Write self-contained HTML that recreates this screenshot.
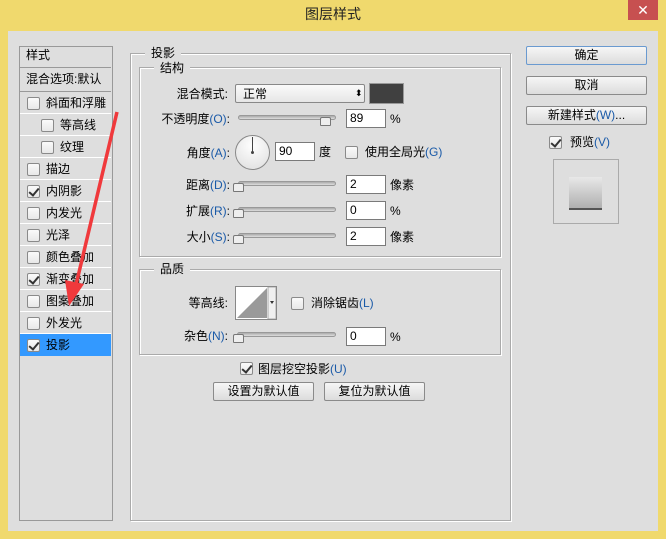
<!DOCTYPE html>
<html><head><meta charset="utf-8"><style>
*{margin:0;padding:0;box-sizing:border-box}
body{width:666px;height:539px;background:#f0d96d;position:relative;overflow:hidden;font-family:"Liberation Sans","Noto Sans CJK SC",sans-serif;font-size:12px;color:#000}
.a{position:absolute}
.t{position:absolute;white-space:nowrap;line-height:14px}
.cb{position:absolute;width:13px;height:13px;border:1px solid #8a8a8a;background:linear-gradient(#fafafa,#e8e8e8);border-radius:2px}
.cb.c::after{content:"";position:absolute;left:3px;top:0px;width:4px;height:8px;border:solid #333;border-width:0 2px 2px 0;transform:rotate(40deg)}
.row{position:absolute;left:20px;width:91px;height:22px;border-bottom:1px solid #fff}
.in{position:absolute;width:40px;height:19px;background:#fff;border:1px solid #7a7a7a;padding-left:3px;line-height:17px}
.sl{position:absolute;height:5px;border:1px solid #999;border-radius:3px;background:linear-gradient(#aaa,#ddd)}
.th{position:absolute;width:11px;height:9px;border:1px solid #777;background:#eee;border-radius:2px 2px 1px 1px}
.btn{position:absolute;height:19px;border:1px solid #8a8a8a;border-radius:2px;background:linear-gradient(#f6f6f6,#dcdcdc);text-align:center;line-height:17px}
.gb{position:absolute;border:1px solid #aaa;box-shadow:1px 1px 0 #fff inset,1px 1px 0 #fff}
.lg{position:absolute;background:#dedede;padding:0 6px;line-height:14px}
.bl{color:#1a5aa8}
</style></head><body>
<div class="t" style="left:0;width:666px;top:7px;text-align:center;font-size:14px;color:#222">图层样式</div>
<div class="a" style="left:628px;top:0;width:30px;height:20px;background:#c75050;color:#fff;text-align:center;line-height:20px;font-size:14px">✕</div>
<div class="a" style="left:8px;top:31px;width:650px;height:500px;background:#dedede"></div>

<!-- left panel -->
<div class="a" style="left:19px;top:46px;width:94px;height:475px;border:1px solid #999;background:#dedede"></div>
<div class="row" style="top:47px;height:21px;border-bottom:1px solid #999"></div>
<div class="t" style="left:26px;top:48px">样式</div>
<div class="row" style="top:68px;height:24px;border-bottom:1px solid #999"></div>
<div class="t" style="left:26px;top:72px">混合选项:默认</div>

<div class="row" style="top:92px"></div><div class="cb" style="left:27px;top:97px"></div><div class="t" style="left:46px;top:96px">斜面和浮雕</div>
<div class="row" style="top:114px"></div><div class="cb" style="left:41px;top:119px"></div><div class="t" style="left:60px;top:118px">等高线</div>
<div class="row" style="top:136px"></div><div class="cb" style="left:41px;top:141px"></div><div class="t" style="left:60px;top:140px">纹理</div>
<div class="row" style="top:158px"></div><div class="cb" style="left:27px;top:163px"></div><div class="t" style="left:46px;top:162px">描边</div>
<div class="row" style="top:180px"></div><div class="cb c" style="left:27px;top:185px"></div><div class="t" style="left:46px;top:184px">内阴影</div>
<div class="row" style="top:202px"></div><div class="cb" style="left:27px;top:207px"></div><div class="t" style="left:46px;top:206px">内发光</div>
<div class="row" style="top:224px"></div><div class="cb" style="left:27px;top:229px"></div><div class="t" style="left:46px;top:228px">光泽</div>
<div class="row" style="top:246px"></div><div class="cb" style="left:27px;top:251px"></div><div class="t" style="left:46px;top:250px">颜色叠加</div>
<div class="row" style="top:268px"></div><div class="cb c" style="left:27px;top:273px"></div><div class="t" style="left:46px;top:272px">渐变叠加</div>
<div class="row" style="top:290px"></div><div class="cb" style="left:27px;top:295px"></div><div class="t" style="left:46px;top:294px">图案叠加</div>
<div class="row" style="top:312px"></div><div class="cb" style="left:27px;top:317px"></div><div class="t" style="left:46px;top:316px">外发光</div>
<div class="row" style="top:334px;height:22px;background:#3399ff;border:none"></div><div class="cb c" style="left:27px;top:339px"></div><div class="t" style="left:46px;top:338px">投影</div>

<!-- main group -->
<div class="gb" style="left:130px;top:53px;width:381px;height:468px"></div>
<div class="lg" style="left:145px;top:46px">投影</div>
<div class="gb" style="left:139px;top:67px;width:362px;height:190px"></div>
<div class="lg" style="left:154px;top:61px">结构</div>

<div class="t" style="left:160px;top:87px;width:68px;text-align:right">混合模式:</div>
<div class="a" style="left:235px;top:84px;width:130px;height:19px;border:1px solid #888;border-radius:2px;background:linear-gradient(#fafafa,#e6e6e6)"></div>
<div class="t" style="left:243px;top:87px">正常</div>
<div class="t" style="left:355px;top:86px;font-size:9px">⬍</div>
<div class="a" style="left:369px;top:83px;width:35px;height:21px;border:1px solid #999;background:#404040"></div>

<div class="t" style="left:150px;top:112px;width:80px;text-align:right">不透明度<span class="bl">(O)</span>:</div>
<div class="sl" style="left:238px;top:115px;width:98px"></div><div class="th" style="left:320px;top:117px"></div>
<div class="in" style="left:346px;top:109px">89</div><div class="t" style="left:390px;top:112px">%</div>

<div class="t" style="left:170px;top:146px;width:60px;text-align:right">角度<span class="bl">(A)</span>:</div>
<div class="a" style="left:235px;top:135px;width:35px;height:35px;border:1px solid #888;border-radius:50%;background:radial-gradient(circle at 50% 30%,#fff,#ddd)"></div>
<div class="a" style="left:252px;top:137px;width:1px;height:16px;background:#444"></div>
<div class="a" style="left:251px;top:151px;width:3px;height:3px;background:#444;border-radius:50%"></div>
<div class="in" style="left:275px;top:142px">90</div><div class="t" style="left:319px;top:145px">度</div>
<div class="cb" style="left:345px;top:146px"></div><div class="t" style="left:365px;top:145px">使用全局光<span class="bl">(G)</span></div>

<div class="t" style="left:170px;top:178px;width:60px;text-align:right">距离<span class="bl">(D)</span>:</div>
<div class="sl" style="left:238px;top:181px;width:98px"></div><div class="th" style="left:233px;top:183px"></div>
<div class="in" style="left:346px;top:175px">2</div><div class="t" style="left:390px;top:178px">像素</div>

<div class="t" style="left:170px;top:204px;width:60px;text-align:right">扩展<span class="bl">(R)</span>:</div>
<div class="sl" style="left:238px;top:207px;width:98px"></div><div class="th" style="left:233px;top:209px"></div>
<div class="in" style="left:346px;top:201px">0</div><div class="t" style="left:390px;top:204px">%</div>

<div class="t" style="left:170px;top:230px;width:60px;text-align:right">大小<span class="bl">(S)</span>:</div>
<div class="sl" style="left:238px;top:233px;width:98px"></div><div class="th" style="left:233px;top:235px"></div>
<div class="in" style="left:346px;top:227px">2</div><div class="t" style="left:390px;top:230px">像素</div>

<div class="gb" style="left:139px;top:269px;width:362px;height:86px"></div>
<div class="lg" style="left:154px;top:262px">品质</div>
<div class="t" style="left:170px;top:296px;width:58px;text-align:right">等高线:</div>
<div class="a" style="left:235px;top:286px;width:42px;height:34px;border:1px solid #888;background:#fff">
<svg width="40" height="32" style="position:absolute;left:0;top:0"><polygon points="1,31 31,1 31,31" fill="#9a9a9a"/><rect x="32" y="0" width="8" height="32" fill="#f0f0f0" stroke="#aaa"/><polygon points="34,14 38,14 36,17" fill="#333"/></svg></div>
<div class="cb" style="left:291px;top:297px"></div><div class="t" style="left:311px;top:296px">消除锯齿<span class="bl">(L)</span></div>

<div class="t" style="left:170px;top:329px;width:58px;text-align:right">杂色<span class="bl">(N)</span>:</div>
<div class="sl" style="left:237px;top:332px;width:99px"></div><div class="th" style="left:233px;top:334px"></div>
<div class="in" style="left:346px;top:327px">0</div><div class="t" style="left:390px;top:330px">%</div>

<div class="cb c" style="left:240px;top:362px"></div><div class="t" style="left:258px;top:362px">图层挖空投影<span class="bl">(U)</span></div>
<div class="btn" style="left:213px;top:382px;width:101px">设置为默认值</div>
<div class="btn" style="left:324px;top:382px;width:101px">复位为默认值</div>

<!-- right -->
<div class="btn" style="left:526px;top:46px;width:121px;border-color:#6a9ad0">确定</div>
<div class="btn" style="left:526px;top:76px;width:121px">取消</div>
<div class="btn" style="left:526px;top:106px;width:121px">新建样式<span class="bl">(W)</span>...</div>
<div class="cb c" style="left:549px;top:136px"></div><div class="t" style="left:570px;top:135px">预览<span class="bl">(V)</span></div>
<div class="a" style="left:553px;top:159px;width:66px;height:65px;border:1px solid #aaa"></div>
<div class="a" style="left:569px;top:177px;width:33px;height:33px;background:linear-gradient(#e8e8e8,#b0b0b0);border-bottom:2px solid #555"></div>

<svg class="a" style="left:0;top:0" width="666" height="539">
<line x1="117" y1="112" x2="76" y2="285" stroke="#f0393c" stroke-width="3.5"/>
<polygon points="65,280 84,284 69,306" fill="#f0393c"/>
</svg>
</body></html>
